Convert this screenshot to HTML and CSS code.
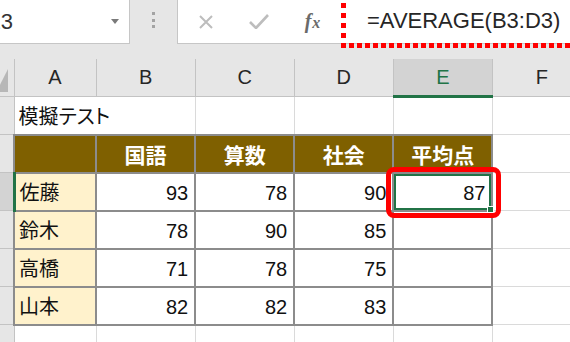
FILE: index.html
```html
<!DOCTYPE html>
<html lang="ja">
<head>
<meta charset="utf-8">
<title>AVERAGE</title>
<link rel="stylesheet" href="styles.css">
</head>
<body>
<div class="app">
  <div class="toolbar">
    <div class="namebox"><span class="ref">E3</span><span class="dd"></span></div>
    <div class="splitter"><i></i><i></i><i></i></div>
    <div class="fbar">
      <span class="ic ic-x"><svg width="14" height="14" viewBox="0 0 14 14"><path d="M1 1 L13 13 M13 1 L1 13" stroke="#bdbdbd" stroke-width="2" fill="none"/></svg></span>
      <span class="ic ic-ok"><svg width="20" height="15" viewBox="0 0 20 15"><path d="M1 8 L7 14 L19 1" stroke="#bdbdbd" stroke-width="2.6" fill="none"/></svg></span>
      <span class="ic ic-fx"><span class="fx"><i class="f">f</i><i class="x">x</i></span></span>
      <div class="formula">=AVERAGE(B3:D3)</div>
    </div>
  </div>
  <div class="band"></div>
  <table class="sheet">
    <colgroup><col class="c-rh"><col class="c-a"><col class="c-n"><col class="c-n"><col class="c-n"><col class="c-n"><col class="c-f"></colgroup>
    <thead>
      <tr class="hdr">
        <th class="corner"><svg width="8" height="23" viewBox="0 0 8 23"><polygon points="8,0 8,23 0,23 0,15.8" fill="#b7b7b7"/></svg></th>
        <th>A</th><th>B</th><th>C</th><th>D</th><th class="sel">E</th><th>F</th>
      </tr>
    </thead>
    <tbody>
      <tr>
        <th class="rh"></th><td class="title">模擬テスト</td><td class="after-title"></td><td></td><td></td><td></td><td></td>
      </tr>
      <tr>
        <th class="rh"></th><td class="tb head"></td><td class="tb head">国語</td><td class="tb head">算数</td><td class="tb head">社会</td><td class="tb head">平均点</td><td></td>
      </tr>
      <tr>
        <th class="rh rh-sel"></th><td class="tb name">佐藤</td><td class="tb num">93</td><td class="tb num">78</td><td class="tb num">90</td><td class="tb num active">87<span class="handle"></span><span class="callout"></span></td><td></td>
      </tr>
      <tr>
        <th class="rh"></th><td class="tb name">鈴木</td><td class="tb num">78</td><td class="tb num">90</td><td class="tb num">85</td><td class="tb num"></td><td></td>
      </tr>
      <tr>
        <th class="rh"></th><td class="tb name">高橋</td><td class="tb num">71</td><td class="tb num">78</td><td class="tb num">75</td><td class="tb num"></td><td></td>
      </tr>
      <tr>
        <th class="rh"></th><td class="tb name">山本</td><td class="tb num">82</td><td class="tb num">82</td><td class="tb num">83</td><td class="tb num"></td><td></td>
      </tr>
      <tr>
        <th class="rh"></th><td></td><td></td><td></td><td></td><td></td><td></td>
      </tr>
    </tbody>
  </table>
</div>
</body>
</html>
```
FILE: styles.css
```css
html, body {
  margin: 0;
  padding: 0;
}
body {
  width: 570px;
  height: 342px;
  overflow: hidden;
  background: #ffffff;
  font-family: "Liberation Sans", "Noto Sans CJK JP", sans-serif;
}
.app {
  width: 570px;
  height: 342px;
  overflow: hidden;
}

/* ---------- formula bar ---------- */
.toolbar {
  display: flex;
  height: 44px;
  background: #e6e6e6;
}
.namebox {
  width: 130px;
  flex: none;
  box-sizing: border-box;
  background: #fff;
  border-bottom: 1px solid #c6c6c6;
  border-right: 1px solid #c6c6c6;
  display: flex;
  align-items: center;
  overflow: hidden;
}
.ref {
  margin-left: -14px;
  font-size: 22px;
  color: #333;
  white-space: nowrap;
}
.dd {
  margin-left: auto;
  margin-right: 10px;
  width: 0;
  height: 0;
  border-left: 4.5px solid transparent;
  border-right: 4.5px solid transparent;
  border-top: 5px solid #7a7a7a;
}
.splitter {
  width: 47px;
  flex: none;
  display: flex;
  flex-direction: column;
  align-items: center;
  justify-content: center;
  gap: 3.5px;
  padding-bottom: 4px;
  box-sizing: border-box;
}
.splitter i {
  display: block;
  width: 3px;
  height: 3px;
  background: #a3a3a3;
}
.fbar {
  flex: 1;
  display: flex;
  background: #fff;
  border-left: 1px solid #c6c6c6;
  border-bottom: 1px solid #c6c6c6;
}
.ic {
  display: flex;
  align-items: center;
  justify-content: center;
  flex: none;
}
.ic-x { width: 56px; }
.ic-ok { width: 50px; }
.ic-fx {
  width: 57px;
  padding-bottom: 2px;
  box-sizing: border-box;
}
.fx {
  font-family: "Liberation Serif", serif;
  color: #6a6a6a;
  font-weight: bold;
  line-height: 1;
  white-space: nowrap;
}
.fx .f { font-size: 20px; }
.fx .x { font-size: 16px; margin-left: 1px; }
.formula {
  flex: 1;
  position: relative;
  padding-left: 26px;
  display: flex;
  align-items: center;
  font-size: 22px;
  color: #262626;
  white-space: nowrap;
  padding-bottom: 1px;
}
.formula::before {
  content: "";
  position: absolute;
  left: 0;
  top: 0;
  width: 5px;
  height: 48px;
  background: repeating-linear-gradient(to bottom, transparent 0 3px, #ff0000 3px 8px, transparent 8px 10px);
  z-index: 3;
}
.formula::after {
  content: "";
  position: absolute;
  left: 0;
  top: 43px;
  right: 0;
  height: 5px;
  background: repeating-linear-gradient(to right, #ff0000 0 5px, transparent 5px 8px);
  z-index: 3;
}
.band {
  height: 15px;
  background: #e6e6e6;
}

/* ---------- sheet ---------- */
.sheet {
  border-collapse: collapse;
  table-layout: fixed;
  width: 592px;
}
.c-rh { width: 14px; }
.c-a { width: 82px; }
.c-n { width: 99px; }
.c-f { width: 99px; }

.hdr th {
  height: 36px;
  padding: 0;
  background: #e6e6e6;
  border: 1px solid #c3c3c3;
  border-top-style: hidden;
  font-weight: normal;
  font-size: 20px;
  color: #262626;
  text-align: center;
  vertical-align: middle;
}
.hdr th.corner {
  border-left-style: hidden;
  text-align: left;
  vertical-align: bottom;
}
.corner svg {
  display: block;
  margin-bottom: 4px;
}
.hdr th.sel {
  background: #d3d3d3;
  color: #217346;
  border-bottom: 3px solid #217346;
}

.sheet tbody tr { height: 38px; }

.rh {
  padding: 0;
  background: #e6e6e6;
  border: 1px solid #c3c3c3;
  border-left-style: hidden;
}
.rh-sel {
  background: #d3d3d3;
  border-right: 3px solid #217346;
}

.sheet td {
  padding: 0 6px 0 4px;
  border: 1px solid #dadada;
  font-family: "Noto Sans CJK JP", sans-serif;
  font-size: 20px;
  color: #111;
  white-space: nowrap;
  vertical-align: middle;
}
.sheet td.title {
  overflow: visible;
  border-right-style: hidden;
  font-feature-settings: "palt";
  position: relative;
  z-index: 1;
}
.sheet td.tb {
  border: 2px solid #8c8c8c;
}
.sheet td.head {
  background: #7f6000;
  color: #ffffff;
  font-weight: bold;
  font-size: 21px;
  text-align: center;
  padding: 0;
}
.sheet td.name {
  background: #fff2cc;
}
.sheet td.num {
  font-family: "Liberation Sans", sans-serif;
  font-size: 20px;
  text-align: right;
  padding-right: 6px;
  padding-top: 3px;
}
.sheet td.active {
  position: relative;
  box-shadow: inset 0 0 0 2px #217346;
}
.handle {
  position: absolute;
  right: -3px;
  bottom: -3px;
  width: 5px;
  height: 5px;
  background: #217346;
  border: 1px solid #fff;
  z-index: 2;
}
.callout {
  position: absolute;
  left: -8px;
  top: -7px;
  width: 115px;
  height: 51px;
  box-sizing: border-box;
  border: 5px solid #ff0000;
  border-radius: 8px;
  z-index: 3;
}
```
